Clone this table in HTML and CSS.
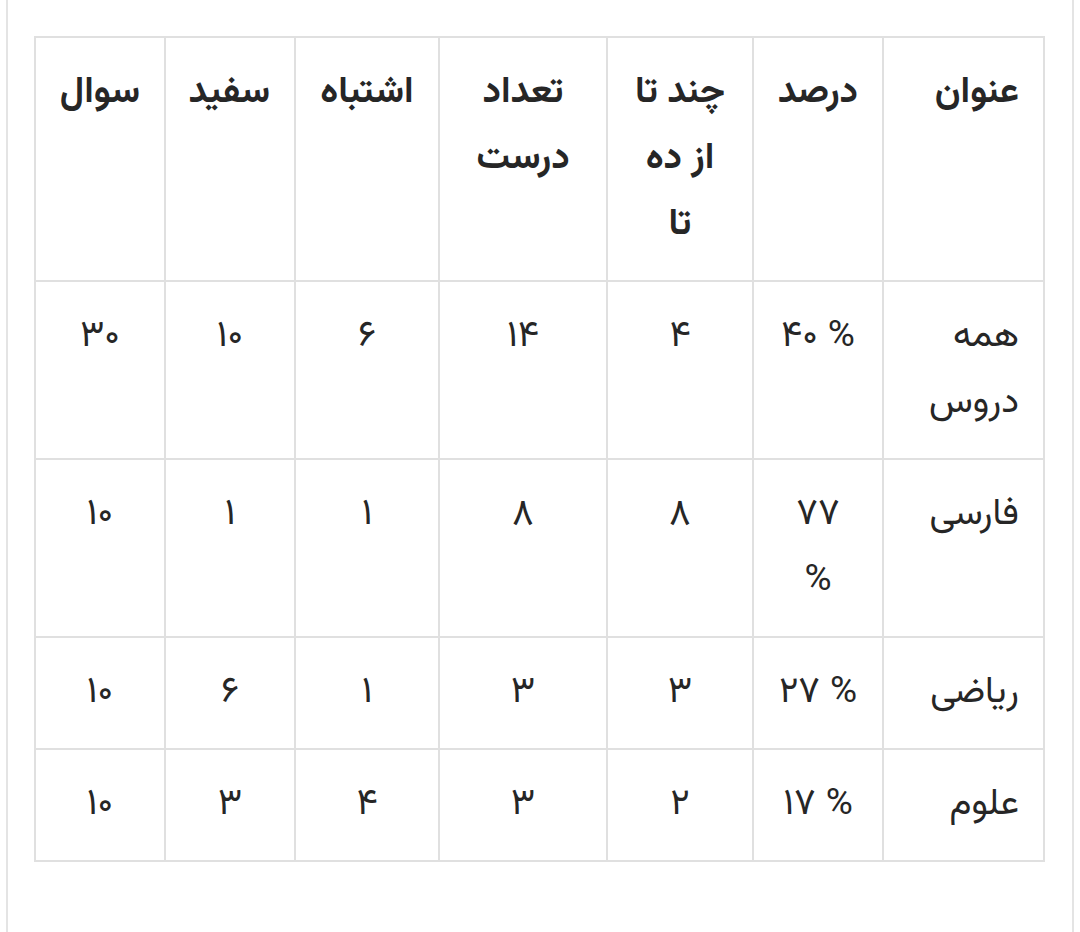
FILE: index.html
```html
<!DOCTYPE html>
<html lang="fa" dir="rtl">
<head>
<meta charset="utf-8">
<title>کارنامه</title>
<link rel="stylesheet" href="styles.css">
</head>
<body>
<div class="panel">
  <table class="scores">
    <colgroup>
      <col class="c-title">
      <col class="c-pct">
      <col class="c-ten">
      <col class="c-right">
      <col class="c-wrong">
      <col class="c-blank">
      <col class="c-q">
    </colgroup>
    <thead>
      <tr>
        <th class="name">عنوان</th>
        <th>درصد</th>
        <th>چند تا از ده تا</th>
        <th>تعداد درست</th>
        <th>اشتباه</th>
        <th>سفید</th>
        <th>سوال</th>
      </tr>
    </thead>
    <tbody>
      <tr>
        <td class="name">همه دروس</td>
        <td class="pct">۴۰ %</td>
        <td>۴</td>
        <td>۱۴</td>
        <td>۶</td>
        <td>۱۰</td>
        <td>۳۰</td>
      </tr>
      <tr>
        <td class="name">فارسی</td>
        <td class="pct">۷۷ %</td>
        <td>۸</td>
        <td>۸</td>
        <td>۱</td>
        <td>۱</td>
        <td>۱۰</td>
      </tr>
      <tr>
        <td class="name">ریاضی</td>
        <td class="pct">۲۷ %</td>
        <td>۳</td>
        <td>۳</td>
        <td>۱</td>
        <td>۶</td>
        <td>۱۰</td>
      </tr>
      <tr>
        <td class="name">علوم</td>
        <td class="pct">۱۷ %</td>
        <td>۲</td>
        <td>۳</td>
        <td>۴</td>
        <td>۳</td>
        <td>۱۰</td>
      </tr>
    </tbody>
  </table>
</div>
</body>
</html>
```

FILE: styles.css
```css
html, body {
  margin: 0;
  padding: 0;
  background: #ffffff;
  height: 100%;
}

body {
  font-family: "Vazirmatn", "Vazir", "Noto Sans Arabic", "DejaVu Sans", sans-serif;
  color: #262626;
  font-size: 37px;
  line-height: 66px;
}

.panel {
  margin: 0 6px;
  min-height: 100%;
  box-sizing: border-box;
  border-left: 2px solid #e4e4e4;
  border-right: 2px solid #e4e4e4;
  padding: 36px 27px 40px 28px;
}

.scores {
  width: 100%;
  border-collapse: collapse;
  table-layout: fixed;
}

.c-title { width: 161px; }
.c-pct   { width: 130px; }
.c-ten   { width: 146px; }
.c-right { width: 168px; }
.c-wrong { width: 144px; }
.c-blank { width: 130px; }
.c-q     { width: 130px; }

.scores th,
.scores td {
  border: 2px solid #e0e0e0;
  padding: 22px 24px;
  vertical-align: top;
  text-align: center;
}

.scores th {
  font-weight: bold;
}

.scores td {
  font-weight: normal;
}

.scores .name {
  text-align: right;
}

.scores td.pct {
  direction: ltr;
}
```
